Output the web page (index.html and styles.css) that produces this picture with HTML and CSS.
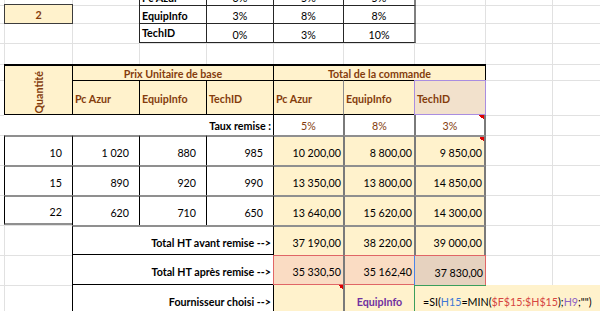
FILE: index.html
```html
<!DOCTYPE html>
<html lang="fr">
<head>
<meta charset="utf-8">
<title>Choix du fournisseur</title>
<link rel="stylesheet" href="styles.css">
</head>
<body>
<div class="sheet">
  <!-- remise table (top) -->
  <div class="cell tt tt-lbl r0 c3">Pc Azur</div>
  <div class="cell tt tt-val r0 c4">3%</div>
  <div class="cell tt tt-val r0 c5">5%</div>
  <div class="cell tt tt-val tt-end r0 c6">5%</div>

  <div class="cell qty-box r1 c1">2</div>
  <div class="cell tt tt-lbl r1 c3">EquipInfo</div>
  <div class="cell tt tt-val r1 c4">3%</div>
  <div class="cell tt tt-val r1 c5">8%</div>
  <div class="cell tt tt-val tt-end r1 c6">8%</div>

  <div class="cell tt tt-lbl tt-last tt-raise r2 c3">TechID</div>
  <div class="cell tt tt-val tt-last r2 c4">0%</div>
  <div class="cell tt tt-val tt-last r2 c5">3%</div>
  <div class="cell tt tt-val tt-last tt-end r2 c6">10%</div>

  <!-- main header -->
  <div class="cell hdr hdr-qty r4 c1 rs2"><span class="vert">Quantité</span></div>
  <div class="cell hdr hdr-grp r4 c2 s3">Prix Unitaire de base</div>
  <div class="cell hdr hdr-grp hdr-grp-end r4 c5 s3">Total de la commande</div>

  <div class="cell hdr hdr-sub r5 c2">Pc Azur</div>
  <div class="cell hdr hdr-sub r5 c3">EquipInfo</div>
  <div class="cell hdr hdr-sub r5 c4">TechID</div>
  <div class="cell hdr hdr-sub r5 c5">Pc Azur</div>
  <div class="cell hdr hdr-sub hdr-soft r5 c6">EquipInfo</div>
  <div class="cell hdr hdr-sub hdr-sel r5 c7">TechID</div>

  <!-- taux remise -->
  <div class="cell taux-lbl r6 c1 s4">Taux remise :</div>
  <div class="cell rate rate-f r6 c5">5%</div>
  <div class="cell rate rate-g r6 c6">8%</div>
  <div class="cell rate rate-g rate-h note r6 c7">3%</div>

  <!-- data rows -->
  <div class="cell d d-first r7 c1">10</div>
  <div class="cell d r7 c2">1&nbsp;020</div>
  <div class="cell d r7 c3">880</div>
  <div class="cell d r7 c4">985</div>
  <div class="cell t t-f r7 c5">10&nbsp;200,00</div>
  <div class="cell t t-g r7 c6">8&nbsp;800,00</div>
  <div class="cell t t-g t-h note r7 c7">9&nbsp;850,00</div>

  <div class="cell d d-first r8 c1">15</div>
  <div class="cell d r8 c2">890</div>
  <div class="cell d r8 c3">920</div>
  <div class="cell d r8 c4">990</div>
  <div class="cell t t-f r8 c5">13&nbsp;350,00</div>
  <div class="cell t t-g r8 c6">13&nbsp;800,00</div>
  <div class="cell t t-g t-h r8 c7">14&nbsp;850,00</div>

  <div class="cell d d-first d-end r9 c1">22</div>
  <div class="cell d r9 c2">620</div>
  <div class="cell d r9 c3">710</div>
  <div class="cell d r9 c4">650</div>
  <div class="cell t t-f r9 c5">13&nbsp;640,00</div>
  <div class="cell t t-g r9 c6">15&nbsp;620,00</div>
  <div class="cell t t-g t-h r9 c7">14&nbsp;300,00</div>

  <!-- totals -->
  <div class="cell sum-lbl sum-top r10 c2 s3">Total HT avant remise --&gt;</div>
  <div class="cell t t-f r10 c5">37&nbsp;190,00</div>
  <div class="cell t t-g r10 c6">38&nbsp;220,00</div>
  <div class="cell t t-g t-h r10 c7">39&nbsp;000,00</div>

  <div class="cell sum-lbl r11 c2 s3">Total HT après remise --&gt;</div>
  <div class="cell net net-f r11 c5">35&nbsp;330,50</div>
  <div class="cell net net-g r11 c6">35&nbsp;162,40</div>
  <div class="cell net net-h r11 c7">37&nbsp;830,00</div>

  <div class="cell sum-lbl sum-open r12 c2 s3">Fournisseur choisi --&gt;</div>
  <div class="cell pick pick-f note r12 c5"></div>
  <div class="cell pick pick-g r12 c6">EquipInfo</div>
  <div class="cell edit r12 c7 s3">=SI(<span class="ref-b">H15</span>=MIN(<span class="ref-r">$F$15:$H$15</span>);<span class="ref-p">H9</span>;"")</div>
</div>
</body>
</html>
```

FILE: styles.css
```css
* { box-sizing: border-box; margin: 0; padding: 0; }

html, body {
  width: 600px;
  height: 311px;
  overflow: hidden;
  background: #fff;
}

body {
  font-family: Lato, "Liberation Sans", sans-serif;
  font-size: 10.7px;
  line-height: 13px;
  color: #000;
}

.sheet {
  --g: #e1e1e1;
  display: grid;
  width: 619px;
  margin-top: -15px;
  grid-template-columns: 4px 68px 67px 67px 67px 70px 71px 71px 67px 67px;
  grid-template-rows: 20px 18px 20px 21px 16px 35px 20px 30px 30px 30px 30px 30px 30px;
  background:
    linear-gradient(var(--g), var(--g)) 0 20px / 100% 1px no-repeat,
    linear-gradient(var(--g), var(--g)) 0 38px / 100% 1px no-repeat,
    linear-gradient(var(--g), var(--g)) 0 58px / 100% 1px no-repeat,
    linear-gradient(var(--g), var(--g)) 0 79px / 100% 1px no-repeat,
    linear-gradient(var(--g), var(--g)) 0 95px / 100% 1px no-repeat,
    linear-gradient(var(--g), var(--g)) 0 130px / 100% 1px no-repeat,
    linear-gradient(var(--g), var(--g)) 0 150px / 100% 1px no-repeat,
    linear-gradient(var(--g), var(--g)) 0 180px / 100% 1px no-repeat,
    linear-gradient(var(--g), var(--g)) 0 210px / 100% 1px no-repeat,
    linear-gradient(var(--g), var(--g)) 0 240px / 100% 1px no-repeat,
    linear-gradient(var(--g), var(--g)) 0 270px / 100% 1px no-repeat,
    linear-gradient(var(--g), var(--g)) 0 300px / 100% 1px no-repeat,
    linear-gradient(var(--g), var(--g)) 4px 0 / 1px 100% no-repeat,
    linear-gradient(var(--g), var(--g)) 72px 0 / 1px 100% no-repeat,
    linear-gradient(var(--g), var(--g)) 139px 0 / 1px 100% no-repeat,
    linear-gradient(var(--g), var(--g)) 206px 0 / 1px 100% no-repeat,
    linear-gradient(var(--g), var(--g)) 273px 0 / 1px 100% no-repeat,
    linear-gradient(var(--g), var(--g)) 343px 0 / 1px 100% no-repeat,
    linear-gradient(var(--g), var(--g)) 414px 0 / 1px 100% no-repeat,
    linear-gradient(var(--g), var(--g)) 485px 0 / 1px 100% no-repeat,
    linear-gradient(var(--g), var(--g)) 552px 0 / 1px 100% no-repeat,
    #fff;
}

/* grid placement */
.r0 { grid-row: 1; } .r1 { grid-row: 2; } .r2 { grid-row: 3; } .r3 { grid-row: 4; }
.r4 { grid-row: 5; } .r5 { grid-row: 6; } .r6 { grid-row: 7; } .r7 { grid-row: 8; }
.r8 { grid-row: 9; } .r9 { grid-row: 10; } .r10 { grid-row: 11; } .r11 { grid-row: 12; }
.r12 { grid-row: 13; }
.c1 { grid-column: 2; } .c2 { grid-column: 3; } .c3 { grid-column: 4; } .c4 { grid-column: 5; }
.c5 { grid-column: 6; } .c6 { grid-column: 7; } .c7 { grid-column: 8; }
.s3 { grid-column-end: span 3; }
.s4 { grid-column-end: span 4; }
.rs2 { grid-row-end: span 2; }

.cell {
  display: flex;
  align-items: center;
  white-space: nowrap;
  min-width: 0;
}

/* top remise table */
.tt {
  background-color: #fff;
  border-left: 1px solid #262626;
  border-top: 1px solid #262626;
  align-items: flex-end;
  padding: 0 2px 1px;
}
.tt-lbl { font-weight: 700; }
.tt-val { justify-content: center; }
.tt-raise { padding-bottom: 3px; }
.tt-end { border-right: 2px solid #7f7f7f; margin-right: -2px; }
.tt-last { border-bottom: 1px solid #262626; }

.qty-box {
  background-color: #fff2cc;
  border: 1px solid #3c3c3c;
  margin: -1px -1px -1px 0;
  justify-content: center;
  align-items: flex-end;
  padding-bottom: 2px;
  color: #843c0c;
  font-weight: 700;
}

/* header */
.hdr {
  background-color: #fff2cc;
  color: #843c0c;
  font-weight: 700;
}
.hdr-qty {
  border-left: 1px solid #000;
  border-top: 2px solid #000;
  border-bottom: 1px solid #000;
  justify-content: center;
  align-items: flex-end;
  padding-bottom: 1px;
}
.vert {
  writing-mode: vertical-rl;
  transform: rotate(180deg);
}
.hdr-grp {
  border-left: 1px solid #000;
  border-top: 2px solid #000;
  justify-content: center;
}
.hdr-grp-end { border-right: 1px solid #000; margin-right: -1px; }
.hdr-sub {
  border-left: 1px solid #000;
  border-top: 1px solid #000;
  border-bottom: 1px solid #000;
  padding: 2px 0 0 2px;
}
.hdr-soft { border-left-color: #8c8c8c; }
.hdr-sel {
  background-color: #f2e1cc;
  border: 1px solid #a98de0;
  margin-right: -1px;
}

/* taux remise row */
.taux-lbl {
  background-color: #fff;
  justify-content: flex-end;
  font-weight: 700;
  padding: 1px 2px 0 0;
}
.rate {
  background-color: #fff;
  color: #843c0c;
  justify-content: center;
  padding-top: 1px;
}
.rate-f { border-left: 1px solid #000; }
.rate-g { border-left: 2px solid #7a7a7a; }
.rate-h { border-right: 2px solid #7a7a7a; margin-right: -1px; }

/* comment indicator */
.note {
  background-image: linear-gradient(to bottom left, #e00000 50%, transparent 50%);
  background-position: top right;
  background-size: 5px 5px;
  background-repeat: no-repeat;
}

/* data cells */
.d {
  background-color: #fff;
  border-top: 2px solid #8f8f8f;
  border-left: 1px solid #000;
  justify-content: flex-end;
  padding: 3px 10px 0 0;
}
.d-end { border-bottom: 2px solid #8f8f8f; }

.t {
  background-color: #fff2cc;
  border-top: 2px solid #8f8f8f;
  justify-content: flex-end;
  padding: 3px 2px 0 0;
}
.t-f { border-left: 1px solid #000; }
.t-g { border-left: 2px solid #7a7a7a; }
.t-h { border-right: 2px solid #7a7a7a; margin-right: -1px; }

/* totals labels */
.sum-lbl {
  background-color: #fff;
  border-left: 1px solid #000;
  border-bottom: 1px solid #000;
  justify-content: flex-end;
  font-weight: 700;
  padding: 3px 2px 0 0;
}
.sum-top { border-top: 2px solid #8f8f8f; }
.sum-open { border-bottom: 0; }

/* net totals (referenced range) */
.net {
  background-color: #fadcc3;
  border-top: 1px solid #e06666;
  border-bottom: 1px solid #e06666;
  justify-content: flex-end;
  padding: 3px 2px 0 0;
}
.net-f { border-left: 1px solid #e06666; }
.net-g { border-left: 2px solid #7a7a7a; }
.net-h {
  background-color: #e6d2bf;
  border-left: 1px solid #4a86e8;
  border-right: 1px solid #e06666;
  border-bottom: 0;
  margin-right: -1px;
}

/* chosen supplier row */
.pick {
  background-color: #fff2cc;
  padding-top: 3px;
}
.pick-f { border-left: 1px solid #000; }
.pick-g {
  border-left: 2px solid #7a7a7a;
  justify-content: center;
  color: #7030a0;
  font-weight: 700;
}
.edit {
  background: linear-gradient(#3a9e5c, #3a9e5c) 0 0 / 71px 1px no-repeat, #fff2cc;
  border-left: 1px solid #3a9e5c;
  padding: 3px 0 0 8px;
}
.ref-b { color: #3e78d6; }
.ref-r { color: #d64541; }
.ref-p { color: #8e63c4; }
```
